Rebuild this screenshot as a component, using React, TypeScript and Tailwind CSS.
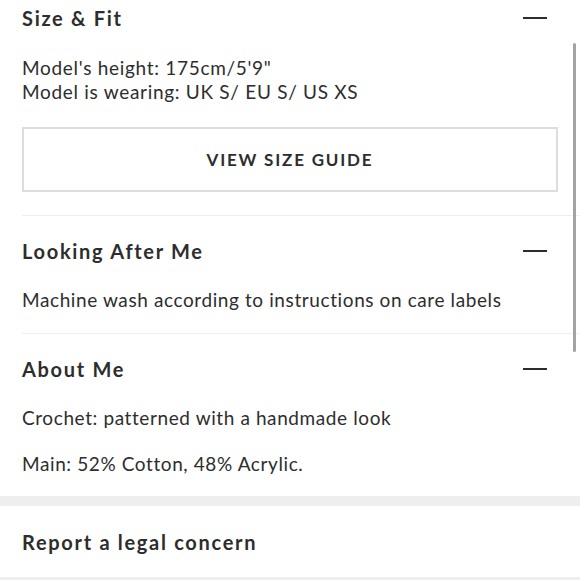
import React from "react";

const font = { fontFamily: "Lato, 'Noto Sans', sans-serif" };

function Minus() {
  return <div className="w-[24px] h-[2px] bg-[#2d2d2d] mr-[11px]" />;
}

function Header({ title }: { title: string }) {
  return (
    <div className="h-[36px] flex items-center justify-between">
      <h2 className="text-[20px] font-bold tracking-[1.7px] text-[#2d2d2d]">{title}</h2>
      <Minus />
    </div>
  );
}

export default function App() {
  return (
    <div className="relative w-[580px] h-[580px] overflow-hidden bg-white text-[#2d2d2d]" style={font}>
      <div className="pl-[22px]">
        <section className="pr-[22px]">
          <Header title="Size & Fit" />
          <div className="mt-[20px] text-[19px] leading-[24px] tracking-[0.7px]">
            <p>Model's height: 175cm/5'9"</p>
            <p>Model is wearing: UK S/ EU S/ US XS</p>
          </div>
          <button className="mt-[23px] w-full h-[65px] border-2 border-[#dddddd] flex items-center justify-center text-[17px] font-bold tracking-[1.8px] text-[#2d2d2d]">
            VIEW SIZE GUIDE
          </button>
          <div className="h-[23px]" />
        </section>
        <section className="border-t border-[#efefef] pt-[17px] pr-[22px] pb-[21px]">
          <Header title="Looking After Me" />
          <p className="mt-[19px] text-[19px] leading-[24px] tracking-[0.6px]">Machine wash according to instructions on care labels</p>
        </section>
        <section className="border-t border-[#efefef] pt-[17px] pr-[22px] pb-[20px]">
          <Header title="About Me" />
          <p className="mt-[19px] text-[19px] leading-[24px] tracking-[0.6px]">Crochet: patterned with a handmade look</p>
          <p className="mt-[22px] text-[19px] leading-[24px] tracking-[0.6px]">Main: 52% Cotton, 48% Acrylic.</p>
        </section>
      </div>
      <div className="h-[10px] bg-[#eeeeee]" />
      <div className="h-[71px] flex items-center px-[22px]">
        <h2 className="text-[20px] font-bold tracking-[1.7px] text-[#2d2d2d]">Report a legal concern</h2>
      </div>
      <div className="h-[10px] bg-[#eeeeee]" />
      <div className="absolute left-[573px] top-[43px] w-[3px] h-[309px] rounded-full bg-[#a3a3a3]" />
    </div>
  );
}
